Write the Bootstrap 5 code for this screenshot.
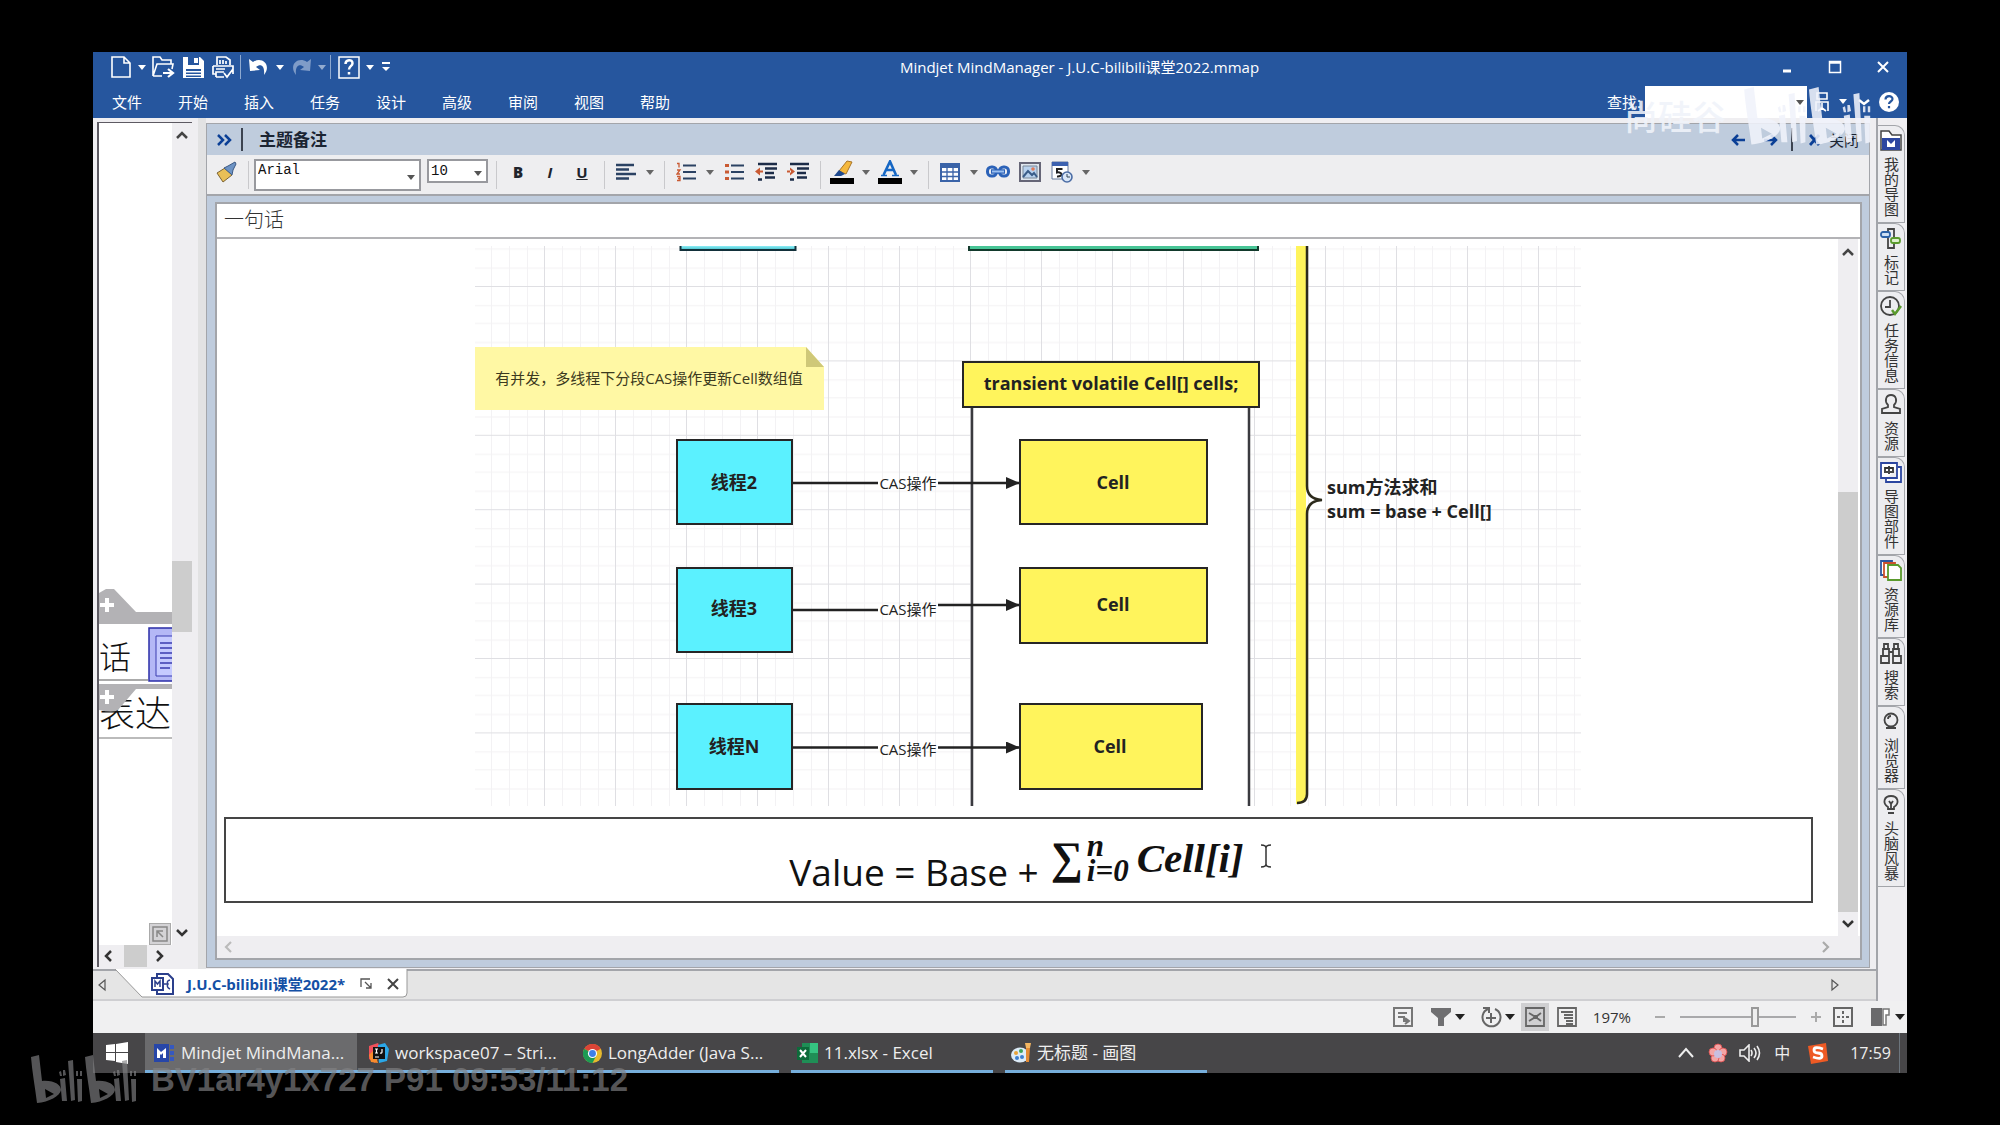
<!DOCTYPE html>
<html lang="zh-CN">
<head>
<meta charset="utf-8">
<meta name="viewport" content="width=device-width, initial-scale=1">
<title>Mindjet MindManager - J.U.C-bilibili课堂2022.mmap</title>
<link href="https://cdn.jsdelivr.net/npm/bootstrap@5.3.0/dist/css/bootstrap.min.css" rel="stylesheet">
<script src="https://cdn.jsdelivr.net/npm/bootstrap@5.3.0/dist/js/bootstrap.bundle.min.js"></script>
<style>
:root{--ui:"Open Sans","Noto Sans CJK SC",sans-serif;--song:"Liberation Serif","Noto Sans CJK SC",serif;--blue:#26569e;--band:#bfccdd;--face:#efeef1;--line:#a3a5aa}
body{background:#000;font-family:var(--ui);font-size:15px;line-height:20px;color:#222;height:100vh;overflow:hidden}
.stage{padding:52px 93px;height:100vh}
button{border:0;background:transparent;padding:0;color:inherit;font:inherit;display:flex;align-items:center;justify-content:center;flex:none}
svg{display:block;flex:none}
.topbar{background:var(--blue);color:#fff}
.titlerow,.menurow{height:33px}
.titlerow{padding:0 0 3px 13px}
.qa{width:30px;height:30px}
.qc{width:12px;height:30px}
.qsep{width:6px;height:24px;border-left:1px solid #8ea9d0;margin-left:2px;margin-right:-2px}
.menurow a{color:#fff;text-decoration:none;width:30px;white-space:nowrap}
.menurow nav{gap:36px;padding-left:19px}
.wbtn{width:48px;height:30px}
.findbox{width:162px;height:32px;border:0;background:#fff;padding:0 8px}
.findwrap{position:relative;color:#555}
.findwrap .caret{position:absolute;right:3px;top:14px}
.caret::before{content:"";border:4px solid transparent;border-top:5px solid currentColor;border-bottom:0}
.mainrow{background:var(--face);min-height:0}
.mapside{width:95px;margin:4px 6px 2px 4px;border-left:2px solid #5d5a62;border-top:1px solid #5d5a62;background:var(--face)}
.canvas{background:#fff;overflow:hidden;position:relative}
.vbar{width:20px;background:var(--face)}
.hbar{height:22px;background:var(--face)}
.thumb{background:#cdcdcd}
.fitcorner{position:absolute;right:1px;bottom:0;width:22px;height:22px;background:#d4d3d6;border:1px solid #aaa}
.split{width:8px;background:#e2e2e3}
.notes{background:var(--band);border:1px solid var(--line);margin:5px 6px 1px 0}
.nhead{height:31px;padding-left:8px;padding-right:10px;color:#1b2432}
.nhead h1{font-size:17px;font-weight:600;line-height:20px}
.nsep{width:2px;height:23px;background:#3c4350}
.ntools{height:41px;background:#eeeef0;border-bottom:2px solid var(--line);padding-left:3px;color:#20242c}
.ib{width:32px;height:34px}
.cb{width:16px;height:34px;color:#666}
.ntools .ib,.ntools .cb{padding-bottom:5px}
.ts{width:12px;height:28px;flex:none;background:linear-gradient(#c9c9cc,#c9c9cc) center/1px 100% no-repeat}
.fieldwrap{position:relative}
.fieldwrap::after{content:"";position:absolute;right:6px;top:50%;border:4px solid transparent;border-top:5px solid #555;border-bottom:0}
.fieldwrap select{appearance:none;width:100%;border:2px solid #98999e;background:#fff;color:#111;font-family:"Liberation Mono",monospace;font-size:14px;line-height:16px;padding:0 2px;display:block}
.fontsel{width:167px}.fontsel select{height:32px;padding-bottom:10px}
.sizesel{width:61px;margin:0 2px 8px 6px}.sizesel select{height:24px}
.sheet{background:#fff;border:2px solid var(--line);margin:6px 7px 7px 8px}
.topic{height:35px;padding:6px 7px;font-family:var(--song);font-size:20px;border-bottom:2px solid #b3b3b6;color:#333;font-weight:300}
.docarea{min-height:0;overflow:hidden;padding-top:7px}
.docscroll{margin-right:2px}
.formula{height:86px;margin:11px 25px 0 7px;border:2px solid #454545;color:#111}
.f1{font-family:"Open Sans",sans-serif;font-weight:400;font-size:37px;line-height:40px;padding-top:23px}
.f2{font-family:"Liberation Serif",serif;font-style:italic;font-weight:700;font-size:41px;line-height:40px;padding:0 16px 4px 12px}
.sums{font-size:31px;line-height:25px;padding-left:4px}
.sigma{font-size:45px;font-style:normal}
.doctabs{height:32px;background:#e5e5e5;border-top:2px solid var(--line);border-bottom:2px solid #cfcfd2}
.dtab{position:relative;height:28px;padding-left:36px;padding-bottom:3px;color:#1450a5;font-weight:700;margin-left:8px;width:293px}
.dtab>svg.tabshape{position:absolute;left:0;top:-2px}
.dtab>*{z-index:1}
.sidetabs{width:31px;border-left:2px solid var(--line);padding-top:7px}
.stab{width:27px;border:1px solid var(--line);border-left:0;border-top-right-radius:10px;flex-direction:column;justify-content:flex-start;padding-top:3px;gap:5px;background:#ededf0;color:#333}
.stab span{writing-mode:vertical-rl;line-height:22px;margin-bottom:5px}
.statusbar{height:32px;background:#f0f0f1;color:#333}
.sb{width:28px;height:28px}
.sb.on{background:#cfcfd1}
.sc{width:14px;height:28px;color:#222}
.sc::before{border-width:5px;border-top-width:6px}
.zoomer{appearance:none;width:116px;height:20px;background:linear-gradient(#a9a9ab,#a9a9ab) center/100% 2px no-repeat;margin:0 7px}
.zoomer::-webkit-slider-thumb{appearance:none;width:8px;height:20px;background:#eee;border:2px solid #999}
.taskbar{height:40px;background:#474648;color:#eee;font-size:16px}
.startbtn{width:52px}
.task{height:40px;width:202px;justify-content:flex-start;border-bottom:3px solid #76aedb;padding-left:6px;gap:6px;padding-top:3px;white-space:nowrap;font-size:17px}
.task.live{background:#6b6b6d;width:212px;padding-left:9px}
.task.wide{width:208px;padding-left:12px}
.task.apart{margin-left:12px}
.tray{width:32px;height:40px}
.wm{position:absolute;pointer-events:none;white-space:nowrap}
.wmtop{left:1624px;top:79px;color:rgba(240,243,250,.88);font-size:34px;line-height:76px;font-weight:500;gap:18px}
.wmbot{left:31px;top:1044px;color:#828284;opacity:.66;font:700 33px/72px "Liberation Sans",sans-serif;gap:12px}
</style>
</head>
<body>
<div class="stage">
<div class="d-flex flex-column h-100">
<header class="topbar">
 <div class="titlerow d-flex align-items-center">
  <button class="qa" aria-label="新建"><svg width="20" height="24" viewBox="0 0 20 24" fill="none" stroke="#fff" stroke-width="1.6"><path d="M1 2h12l6 6v14H1zM13 2v6h6"/></svg></button><button class="qc caret" aria-label="新建选项"></button>
  <button class="qa" aria-label="打开"><svg width="24" height="24" viewBox="0 0 24 24" fill="none" stroke="#fff" stroke-width="1.6"><path d="M2 21V2h7l2 3h9v4M2 21L6 9h16l-1 5M2 21h9"/><path d="M12 18h9M17 14l5 4-5 4" stroke-width="2.2"/></svg></button>
  <button class="qa" aria-label="保存"><svg width="23" height="23" viewBox="0 0 23 23"><path d="M1 1h17l4 4v17H1z" fill="#fff"/><path d="M6 1h11v8H6zM4 13h15v8H4z" fill="#26569e"/><path d="M12 2h4v5h-4zM4 15h15v1.500H4zM4 18h15v1.500H4z" fill="#fff"/></svg></button>
  <button class="qa" aria-label="打印"><svg width="24" height="24" viewBox="0 0 24 24" fill="none" stroke="#fff" stroke-width="1.7"><path d="M6 10V2h9l4 3v5M9 5v4M12 5v4M15 6v3M2 11h20v8M2 11v8h3M5 14h9M5 22V17h8M5 22h8M13 18l3 4 6-8"/></svg></button>
  <span class="qsep"></span>
  <button class="qa" aria-label="撤消"><svg width="22" height="20" viewBox="0 0 22 20"><path d="M1 2l1 12 10-1-4-3c5-4 9-1 8 8C24 8 14-1 5 5z" fill="#fff"/></svg></button><button class="qc caret" aria-label="撤消选项"></button>
  <button class="qa" aria-label="恢复"><svg width="22" height="20" viewBox="0 0 22 20"><path d="M21 2l-1 12-10-1 4-3c-5-4-9-1-8 8C-2 8 8-1 17 5z" fill="#7f9cc8"/></svg></button><button class="qc caret text-white-50" aria-label="恢复选项"></button>
  <span class="qsep"></span>
  <button class="qa" aria-label="帮助"><svg width="22" height="24" viewBox="0 0 22 24" fill="none" stroke="#fff"><path d="M1 2h20v21H1z" stroke-width="1.500"/><path d="M7.500 9c0-5 7-5 7-.8 0 3-3.500 3-3.500 6.300M11 17v2.500" stroke-width="2.500"/></svg></button><button class="qc caret" aria-label="帮助选项"></button>
  <button class="qc ms-1" aria-label="自定义"><svg width="8" height="10" viewBox="0 0 8 10"><path d="M0 0h8v2H0zM0 5h8L4 9z" fill="#fff"/></svg></button>
  <div class="flex-fill text-center ps-1">Mindjet MindManager - J.U.C-bilibili课堂2022.mmap</div>
  <button class="wbtn" aria-label="最小化"><svg width="12" height="12"><path d="M2 10h8" stroke="#fff" stroke-width="3"/></svg></button>
  <button class="wbtn" aria-label="最大化"><svg width="14" height="14"><path d="M1.500 1.500h11v11h-11zM1 3h12" fill="none" stroke="#fff" stroke-width="1.500"/></svg></button>
  <button class="wbtn" aria-label="关闭"><svg width="12" height="12"><path d="M1 1l10 10M11 1L1 11" stroke="#fff" stroke-width="2"/></svg></button>
 </div>
 <div class="menurow d-flex align-items-center">
  <nav class="d-flex flex-fill"><a href="#">文件</a><a href="#">开始</a><a href="#">插入</a><a href="#">任务</a><a href="#">设计</a><a href="#">高级</a><a href="#">审阅</a><a href="#">视图</a><a href="#">帮助</a></nav>
  <label for="find" class="pe-1">查找:</label><div class="findwrap align-self-end"><input id="find" class="findbox d-block" type="text"><span class="caret d-flex"></span></div>
  <button class="qa" aria-label="用户"><svg width="18" height="22" viewBox="0 0 18 22" fill="none" stroke="#fff" stroke-width="1.600"><path d="M4 2h10v6H4zM3 20V11h12v9M9 12v5l-4 3M9 17l4 3"/></svg></button>
  <button class="qc caret" aria-label="用户选项"></button>
  <button class="qa" aria-label="折叠"><svg width="12" height="8"><path d="M1 2l5 4 5-4" fill="none" stroke="#fff" stroke-width="2.500"/></svg></button>
  <button class="me-2" aria-label="帮助中心"><svg width="20" height="20" viewBox="0 0 20 20"><circle cx="10" cy="10" r="10" fill="#fff"/><path d="M6.500 7.500c0-4.500 7-4.500 7-.5 0 2.500-3.500 2.500-3.500 5M10 14v2.200" stroke="#26569e" stroke-width="2.200" fill="none"/></svg></button>
 </div>
</header>

<main class="mainrow d-flex flex-fill">
 <div class="flex-fill d-flex flex-column" style="min-width:0">
  <div class="flex-fill d-flex" style="min-height:0">
   <section class="mapside d-flex flex-column">
    <div class="flex-fill d-flex">
     <div class="canvas flex-fill">
      <svg width="73" height="640" viewBox="0 0 73 640">
       <path d="M0 470l7-4h8l22 23h37v12H0z" fill="#b3b2b5"/>
       <path d="M8 475v14M1 482h14" stroke="#fff" stroke-width="4"/>
       <text x="0" y="546" font-size="32" font-family="Noto Sans CJK SC" font-weight="300" fill="#111">话</text>
       <path d="M50 505h26v53H50z" fill="#b4b8f6" stroke="#2a2ca8" stroke-width="1.500"/><path d="M57 513h20v40H57z" fill="#c5caff" stroke="#3b3db0"/><path d="M61 520h13M61 525h13M61 530h13M61 535h13M61 540h13M61 545h10" stroke="#3b3db0" stroke-width="1.500"/>
       <path d="M0 557h49" stroke="#aaa" stroke-width="2"/>
       <text x="0" y="604" font-size="36" font-family="Noto Sans CJK SC" font-weight="300" fill="#111">表达</text>
       <path d="M0 561h74v5H37L19 587q-5 3-19 0z" fill="#b3b2b5"/>
       <path d="M8 567v14M1 574h14" stroke="#fff" stroke-width="4"/>
       <path d="M0 615h74" stroke="#bbb" stroke-width="2"/>
      </svg>
      <button class="fitcorner" aria-label="适合"><svg width="16" height="16" viewBox="0 0 16 16" fill="none" stroke="#888" stroke-width="1.500"><path d="M1 1h14v14H1zM5 11V5h6M5 5l6 6"/></svg></button>
     </div>
     <div class="vbar d-flex flex-column align-items-center">
      <svg width="20" height="22"><path d="M5 15l5-5 5 5" fill="none" stroke="#444" stroke-width="2.500"/></svg>
      <div style="flex:417"></div><div class="thumb w-100" style="flex:71"></div><div style="flex:289"></div>
      <svg width="20" height="24"><path d="M5 9l5 5 5-5" fill="none" stroke="#333" stroke-width="2.500"/></svg>
     </div>
    </div>
    <div class="hbar d-flex align-items-center">
     <svg width="25" height="20"><path d="M12 5l-5 5 5 5" fill="none" stroke="#333" stroke-width="2.500"/></svg>
     <div class="thumb h-100" style="width:23px"></div>
     <svg width="25" height="20"><path d="M10 5l5 5-5 5" fill="none" stroke="#333" stroke-width="2.500"/></svg>
    </div>
   </section>
   <div class="split"></div>
   <section class="notes flex-fill d-flex flex-column" style="min-width:0">
    <div class="nhead d-flex align-items-center">
     <button aria-label="收起"><svg width="18" height="14"><path d="M3 2l5 5-5 5M10 2l5 5-5 5" fill="none" stroke="#0b3f96" stroke-width="2.500"/></svg></button>
     <span class="nsep ms-2 me-1"></span><h1 class="m-0 ms-2 ps-1 flex-fill">主题备注</h1>
     <button class="ib" aria-label="上一个"><svg width="15" height="14"><path d="M14 7H2M7 2L2 7l5 5" fill="none" stroke="#0b3f96" stroke-width="2.500"/></svg></button>
     <button class="ib" aria-label="下一个"><svg width="15" height="14"><path d="M1 7h12M8 2l5 5-5 5" fill="none" stroke="#0b3f96" stroke-width="2.500"/></svg></button>
     <span class="nsep ms-1 me-3"></span>
     <button aria-label="关闭备注"><svg class="me-2" width="12" height="12"><path d="M1 1l9 10M10 1L1 11" stroke="#0b3f96" stroke-width="2.800"/></svg><span>关闭</span></button>
    </div>
    <div class="ntools d-flex align-items-center">
     <button class="ib" aria-label="格式刷"><svg width="22" height="22" viewBox="0 0 22 22"><path d="M2 12l8-5 7 7-9 7z" fill="#e9bf57" stroke="#7b6334"/><path d="M9 7l4-2 7-4 1 2-3 6-1 5z" fill="#6d93c4" stroke="#3c5a85"/></svg></button><span class="ts"></span>
     <div class="fieldwrap fontsel"><select aria-label="字体"><option>Arial</option></select></div>
     <div class="fieldwrap sizesel"><select aria-label="字号"><option>10</option></select></div>
     <span class="ts"></span>
     <button class="ib fw-bold" aria-label="加粗"><b>B</b></button><button class="ib fst-italic fw-bold" aria-label="倾斜">I</button><button class="ib text-decoration-underline fw-bold" aria-label="下划线">U</button>
     <span class="ts"></span>
     <button class="ib" aria-label="对齐"><svg width="20" height="18"><path d="M0 2h18M0 6.500h13M0 11h20M0 15.500h13" stroke="#2b4263" stroke-width="2.500"/></svg></button><button class="cb caret" aria-label="对齐选项"></button>
     <span class="ts"></span>
     <button class="ib" aria-label="编号"><svg width="20" height="20"><path d="M7 3.500h13M7 10h13M7 16.500h13" stroke="#2b4263" stroke-width="2.200"/><path d="M1 1.500h2v4M1 8h3l-3 4h3M1 14.500h3v4H1M2 16.500h2" fill="none" stroke="#c95a33" stroke-width="1.300"/></svg></button><button class="cb caret" aria-label="编号选项"></button>
     <button class="ib" aria-label="项目符号"><svg width="20" height="20"><path d="M7 3.500h13M7 10h13M7 16.500h13" stroke="#2b4263" stroke-width="2.200"/><path d="M1 2h4v3H1zM1 8.500h4v3H1zM1 15h4v3H1z" fill="#c95a33"/></svg></button>
     <button class="ib" aria-label="减少缩进"><svg width="22" height="20"><path d="M3 2h19M10 6.500h12M10 11h9M3 17.500h4M10 15.500h10" stroke="#1c2c48" stroke-width="2.400"/><path d="M0 9.500l5-4v8zM4 8.500h4v2H4z" fill="#c95a33"/></svg></button>
     <button class="ib" aria-label="增加缩进"><svg width="22" height="20"><path d="M3 2h19M10 6.500h12M10 11h9M3 17.500h4M10 15.500h10" stroke="#1c2c48" stroke-width="2.400"/><path d="M8 9.500l-5-4v8zM0 8.500h4v2H0z" fill="#c95a33"/></svg></button>
     <span class="ts"></span>
     <button class="ib" aria-label="突出显示"><svg width="24" height="24" viewBox="0 0 24 24"><path d="M0 18h24v6H0z" fill="#000"/><path d="M9 11l8-10 5 1-6 12z" fill="#f5b83d" stroke="#a8752a"/><path d="M4 16l5-6 6 4-4 2z" fill="#1f4a8f"/></svg></button><button class="cb caret" aria-label="突出显示选项"></button>
     <button class="ib" aria-label="字体颜色"><svg width="24" height="24" viewBox="0 0 24 24"><path d="M0 18h24v6H0z" fill="#000"/><path d="M5.500 15L12 1.500 18 15M8 10h8" fill="none" stroke="#1667c4" stroke-width="2.600"/><path d="M3 15.500h6M14 15.500h7" stroke="#1667c4" stroke-width="1.600"/></svg></button><button class="cb caret" aria-label="字体颜色选项"></button>
     <span class="ts"></span>
     <button class="ib" aria-label="表格"><svg width="20" height="19"><path d="M1 1h18v17H1z" fill="#fff" stroke="#3a63a8" stroke-width="2"/><path d="M1 1h18v4H1z" fill="#3a63a8"/><path d="M1 9h18M1 13.500h18M7 4v14M13 4v14" stroke="#3a63a8" stroke-width="1.300"/></svg></button><button class="cb caret" aria-label="表格选项"></button>
     <button class="ib" aria-label="链接"><svg width="24" height="16" viewBox="0 0 24 16" fill="none"><rect x="1.500" y="3" width="9" height="9" rx="4" stroke="#2b62b8" stroke-width="3"/><rect x="13.500" y="3" width="9" height="9" rx="4" stroke="#2b62b8" stroke-width="3"/><path d="M5 7.500h14" stroke="#2b62b8" stroke-width="4.500"/><path d="M6 7.500h12" stroke="#9cc0f0" stroke-width="2"/></svg></button>
     <button class="ib" aria-label="图片"><svg width="22" height="20"><path d="M1 1h20v18H1z" fill="#dfe6ee" stroke="#667" stroke-width="2"/><path d="M4 4h14v12H4z" fill="#b9d2ee" stroke="#7b8898"/><path d="M4 15l5-6 4 4 2-2 3 4" fill="none" stroke="#3a5c88" stroke-width="2"/><circle cx="14" cy="7" r="1.800" fill="#e07a58"/></svg></button>
     <button class="ib" aria-label="日期"><svg width="24" height="24" viewBox="0 0 24 24"><path d="M2 2h16v17H2z" fill="#fff" stroke="#667a9c"/><path d="M2 2h16v4H2z" fill="#3d62b0"/><path d="M12.500 9H7v3.500c6-1 6 4.500 0 4" fill="none" stroke="#222" stroke-width="2"/><circle cx="17" cy="17" r="5" fill="#d9e6f7" stroke="#4b6da5" stroke-width="1.600"/><path d="M17 14v3h3" fill="none" stroke="#345"/></svg></button><button class="cb caret" aria-label="日期选项"></button>
    </div>
    <div class="sheet flex-fill d-flex flex-column" style="min-height:0">
     <div class="topic">一句话</div>
     <div class="flex-fill d-flex" style="min-height:0">
      <div class="docarea flex-fill">
       <svg class="mx-auto" width="1106" height="560" viewBox="475 246 1106 560" font-family="Noto Sans, Noto Sans CJK SC, sans-serif" fill="#222" text-anchor="middle">
        <defs>
         <pattern id="grid" x="544" y="286" width="71" height="74.400" patternUnits="userSpaceOnUse"><path d="M18.500 0v75M36.500 0v75M54.500 0v75M0 19.500h72M0 37.500h72M0 56.500h72" stroke="#f3f2f4" fill="none"/><path d="M.5 0v75M0 .5h72" stroke="#dfdfe3" fill="none"/></pattern>
         <linearGradient id="cy" x2="0" y2="1"><stop stop-color="#8deff8"/><stop offset="1" stop-color="#3fb9c4"/></linearGradient>
         <marker id="arr" viewBox="0 0 14 12" refX="13" refY="6" markerWidth="15" markerHeight="12" markerUnits="userSpaceOnUse" orient="auto"><path d="M0 0l14 6-14 6z" fill="#222"/></marker>
        </defs>
        <path d="M474 246h1107v560H474z" fill="url(#grid)"/>
        <path d="M680 246h116v4H680z" fill="url(#cy)"/><path d="M680.500 246v4h115v-4" fill="none" stroke="#12303a" stroke-width="2"/>
        <path d="M968 246h290v4H968z" fill="#48c596"/><path d="M969 246v4h289v-4" fill="none" stroke="#123a2c" stroke-width="2"/>
        <path d="M474 347h332l18 20v43H474z" fill="#fff8a4"/><path d="M806 347v20h18z" fill="#cfc878"/>
        <text x="649" y="384" font-size="15" font-family="Open Sans, Noto Sans CJK SC, sans-serif" fill="#3c3a20">有并发，多线程下分段CAS操作更新Cell数组值</text>
        <path d="M972 390h277v416H972z" fill="#fff"/><path d="M972 806V400M1249 400v406" stroke="#3a3a3f" stroke-width="2.500"/>
        <g stroke="#262626" stroke-width="2"><path d="M963 362h296v45H963z" fill="#fff45c"/>
        <path d="M677 440h115v84H677zM677 568h115v84H677zM677 704h115v85H677z" fill="#5bf1ff"/>
        <path d="M1020 440h187v84h-187zM1020 568h187v75h-187zM1020 704h182v85h-182z" fill="#fff45c"/></g>
        <g stroke="#222" stroke-width="2.500"><path d="M793 483h85M793 610h85M793 747.500h85"/><path d="M938 483h81" marker-end="url(#arr)"/><path d="M938 605h81" marker-end="url(#arr)"/><path d="M938 747.500h81" marker-end="url(#arr)"/></g>
        <g font-family="Open Sans, Noto Sans CJK SC, sans-serif" font-size="15"><text x="908" y="489">CAS操作</text><text x="908" y="615">CAS操作</text><text x="908" y="755">CAS操作</text></g>
        <g font-weight="700" font-size="18" font-family="Open Sans, Noto Sans CJK SC, sans-serif"><text x="1111" y="390">transient volatile Cell[] cells;</text>
        <text x="734" y="489">线程2</text><text x="734" y="615">线程3</text><text x="734" y="753">线程N</text>
        <text x="1113" y="489">Cell</text><text x="1113" y="611">Cell</text><text x="1110" y="753">Cell</text>
        <text x="1327" y="494" text-anchor="start">sum方法求和</text><text x="1327" y="518" text-anchor="start">sum = base + Cell[]</text></g>
        <path d="M1296 246h10v550q0 8-10 8z" fill="#fff45c"/>
        <path d="M1307 246v240q0 13 15 14-15 1-15 14v280q0 9-10 9" fill="none" stroke="#2c2a1c" stroke-width="2.500"/>
       </svg>
       <div class="formula d-flex justify-content-center align-items-center ps-4">
        <span class="f1">Value = Base +</span>
        <span class="f2 d-flex align-items-center"><span class="sigma">∑</span><span class="sums d-flex flex-column"><span>n</span><span>i=0</span></span><span class="ps-2">Cell[i]</span></span>
        <svg width="12" height="40"><path d="M1 5q5 0 5 3v16q0 3-5 3M11 5q-5 0-5 3v16q0 3 5 3" fill="none" stroke="#333" stroke-width="1.500"/></svg>
       </div>
      </div>
      <div class="vbar docscroll d-flex flex-column align-items-center">
       <svg width="20" height="26"><path d="M5 16l5-5 5 5" fill="none" stroke="#444" stroke-width="2.500"/></svg>
       <div style="flex:226"></div><div class="thumb w-100" style="flex:418"></div>
       <svg width="20" height="24"><path d="M5 9l5 5 5-5" fill="none" stroke="#333" stroke-width="2.500"/></svg>
      </div>
     </div>
     <div class="hbar d-flex align-items-center justify-content-between">
      <svg width="22" height="20"><path d="M14 5l-5 5 5 5" fill="none" stroke="#bbb" stroke-width="2.200"/></svg>
      <svg class="me-4" width="20" height="20"><path d="M7 5l5 5-5 5" fill="none" stroke="#aaa" stroke-width="2.200"/></svg>
     </div>
    </div>
   </section>
  </div>
  <div class="doctabs d-flex align-items-center">
   <button class="ps-1" aria-label="向左"><svg width="10" height="14"><path d="M8 2v10L2 7z" fill="none" stroke="#555" stroke-width="1.200"/></svg></button>
   <div class="dtab d-flex align-items-center">
    <svg class="tabshape" width="293" height="30"><path d="M0 0l27 28h261q4 0 4-4V0" fill="#fff" stroke="#999"/></svg>
    <svg class="position-relative" width="24" height="22" viewBox="0 0 24 22" fill="none" stroke="#2b3f8c" stroke-width="2"><path d="M6 5V1h11l5 5v15H6v-4M1 5h11v12H1z" fill="#fff"/><path d="M4 14V8l2.500 3L9 8v6M12 11h5M19 7q-4 1-2 4-2 3 2 5" stroke-width="1.500"/></svg>
    <span class="position-relative ps-2 ms-1 text-nowrap">J.U.C-bilibili课堂2022*</span>
    <button class="position-relative ms-auto" aria-label="还原"><svg width="14" height="12" fill="none" stroke="#555" stroke-width="1.300"><path d="M1 9V1h9M5 4l6 6M11 5v5H6"/></svg></button>
    <button class="position-relative ms-2 me-2 ps-1" aria-label="关闭文档"><svg width="14" height="12"><path d="M2 1l10 10M12 1L2 11" stroke="#444" stroke-width="2"/></svg></button>
   </div>
   <button class="ms-auto me-4 pe-2 ps-1" aria-label="向右"><svg class="me-1" width="10" height="14"><path d="M2 2v10l6-5z" fill="none" stroke="#555" stroke-width="1.200"/></svg></button>
  </div>
 </div>
 <aside class="sidetabs d-flex flex-column align-items-start">
  <button class="stab"><svg width="22" height="23" viewBox="0 0 22 23"><path d="M1 21V2h8l3 4h9v15z" fill="#fff" stroke="#444" stroke-width="1.500"/><path d="M2 9h18v12H2z" fill="#2c46a0"/><path d="M7 18v-7l4 4 4-4v7z" fill="#fff"/></svg><span>我的导图</span></button>
  <button class="stab"><svg width="22" height="23" viewBox="0 0 22 23" fill="none" stroke-width="1.800"><path d="M8 2h6v19H8z" stroke="#444"/><rect x="1" y="5" width="9" height="5" rx="2" fill="#cfe0f5" stroke="#2d62a8"/><rect x="11" y="11" width="9" height="5" rx="2" fill="#dff0cf" stroke="#5a9a2d"/></svg><span>标记</span></button>
  <button class="stab"><svg width="22" height="23" viewBox="0 0 22 23" fill="none" stroke-width="1.800"><circle cx="10" cy="11" r="9" stroke="#444"/><path d="M10 5v7H5" stroke="#444"/><path d="M12 15l3 4 6-8" stroke="#5a9a2d" stroke-width="2.500"/></svg><span>任务信息</span></button>
  <button class="stab"><svg width="22" height="23" viewBox="0 0 22 23" fill="none" stroke="#444" stroke-width="1.800"><path d="M2 20v-4l6-2v-2C4 8 6 2 11 2s7 6 3 10v2l6 2v4z"/></svg><span>资源</span></button>
  <button class="stab"><svg width="22" height="23" viewBox="0 0 22 23" fill="none" stroke="#2c46a0" stroke-width="1.800"><path d="M6 18v3h15V6h-3M1 2h16v15H1z" fill="#fff"/><path d="M5 12V7h8v5M9 5v8M7 12v-2M11 12v-2" stroke="#333"/></svg><span>导图部件</span></button>
  <button class="stab"><svg width="22" height="23" viewBox="0 0 22 23" fill="#fff" stroke-width="1.800"><path d="M1 2h11v14H1z" stroke="#2c56a0"/><path d="M4 4h11v14H4z" stroke="#c9502d"/><path d="M8 6h10l3 3v12H8z" stroke="#5a9a2d"/></svg><span>资源库</span></button>
  <button class="stab"><svg width="22" height="23" viewBox="0 0 22 23" fill="none" stroke="#444" stroke-width="1.800"><path d="M4 2h4v5H4zM14 2h4v5h-4zM3 7h6v7H3zM13 7h6v7h-6zM1 14h8v7H1zM13 14h8v7h-8zM9 10h4"/></svg><span>搜索</span></button>
  <button class="stab"><svg width="22" height="23" viewBox="0 0 22 23" fill="none" stroke="#444" stroke-width="1.800"><circle cx="11" cy="10" r="6.500"/><path d="M6 18h10M8 9q0-3 3-3"/></svg><span>浏览器</span></button>
  <button class="stab"><svg width="22" height="23" viewBox="0 0 22 23" fill="none" stroke="#444" stroke-width="1.800"><path d="M8 16v-2C2 10 4 3 11 3s9 7 3 11v2zM8 20h6M9 8l2 3 2-3M11 11v5"/></svg><span>头脑风暴</span></button>
 </aside>
</main>

<div class="statusbar d-flex align-items-center justify-content-end">
 <button class="sb" aria-label="备注"><svg width="20" height="20" fill="none" stroke="#777" stroke-width="2"><path d="M1 1h18v18H1zM5 6h9M5 10h6v4h5M12 11l4 3-4 3" /></svg></button>
 <button class="sb ms-2 ps-1" aria-label="筛选"><svg width="20" height="20"><path d="M0 1h20v4l-7 6v8H7v-8L0 5z" fill="#6f6f71"/></svg></button><button class="sc caret me-2" aria-label="筛选选项"></button>
 <button class="sb ps-1" aria-label="添加"><svg width="22" height="22" viewBox="0 0 22 22" fill="none" stroke="#666" stroke-width="2"><path d="M8 3a9 9 0 1 0 7 0M11 7v10M6 12h10M3 2h6v5"/></svg></button><button class="sc caret me-1" aria-label="添加选项"></button>
 <button class="sb on" aria-label="导图视图"><svg width="20" height="20" fill="none" stroke="#666" stroke-width="1.800"><path d="M1 1h18v18H1zM4 6l5 3h3l4-3M4 14l5-3h3l4 3M8 10h5"/></svg></button>
 <button class="sb ms-1" aria-label="大纲视图"><svg width="20" height="20" fill="none" stroke="#666" stroke-width="1.800"><path d="M1 1h18v18H1zM4 5h12M7 8h9M7 11h9M9 14h7M9 17h7"/></svg></button>
 <span class="ms-2 ps-1 me-3">197%</span>
 <button class="px-2" aria-label="缩小"><svg width="10" height="10"><path d="M0 5h10" stroke="#aaa" stroke-width="2"/></svg></button>
 <input class="zoomer" type="range" min="0" max="100" value="66" aria-label="缩放">
 <button class="px-2" aria-label="放大"><svg width="10" height="10"><path d="M0 5h10M5 0v10" stroke="#aaa" stroke-width="2"/></svg></button>
 <button class="sb" aria-label="适合页面"><svg width="20" height="20" fill="none" stroke="#666" stroke-width="2"><path d="M1 1h18v18H1zM10 4v3M10 13v3M4 10h3M13 10h3M9 10h2"/></svg></button>
 <button class="sb ms-2 ps-1" aria-label="面板"><svg width="20" height="18"><path d="M0 0h11v18H0z" fill="#6a6a6c"/><path d="M12 1h6v6h-3v10h-3z" fill="#fff" stroke="#777" stroke-width="1.500"/></svg></button><button class="sc caret" aria-label="面板选项"></button>
</div>

<footer class="taskbar d-flex align-items-center">
 <button class="startbtn" aria-label="开始菜单"><svg class="me-1" width="22" height="22"><path d="M0 3l9-1v8H0zM10 2l12-2v10H10zM0 11h9v8l-9-1zM10 11h12v11l-12-2z" fill="#fff"/></svg></button>
 <button class="task live"><svg width="21" height="18"><path d="M0 0h15v18H0z" fill="#2746a8"/><path d="M3 14V4l4 4 5-4v10H9V9l-2 2-1-1v4z" fill="#fff"/><path d="M16 1h4v4h-4zM16 7h4v4h-4zM16 13h4v4h-4z" fill="#3558c0"/></svg>Mindjet MindMana...</button>
 <button class="task wide"><svg width="20" height="20"><path d="M0 3l9-3 4 9-7 11-6-4z" fill="#f0505a"/><path d="M9 2l7-2 4 6-2 12-8 2z" fill="#2aa7e8"/><path d="M0 12l5-5 4 13-7-1z" fill="#f98c2c"/><path d="M4 4h12v12H4z" fill="#111"/><path d="M6 6h3M7.500 6v4M6 10h3M13 6v3q0 1.500-2 1M6 14h4" fill="none" stroke="#fff" stroke-width="1.200"/></svg>workspace07 – Stri...</button>
 <button class="task apart"><svg width="19" height="19" viewBox="0 0 20 20"><circle cx="10" cy="10" r="10" fill="#e5b92e"/><path d="M10 10L1.300 5A10 10 0 0 1 18.700 5z" fill="#db4437"/><path d="M10 10L1.300 5A10 10 0 0 0 10 20l4-8z" fill="#1c9b54"/><circle cx="10" cy="10" r="4.800" fill="#fff"/><circle cx="10" cy="10" r="3.600" fill="#3d7fe8"/></svg>LongAdder (Java S...</button>
 <button class="task apart"><svg width="21" height="20"><path d="M5 0h16v20H5z" fill="#1f8f56"/><path d="M13 0h8v10h-8z" fill="#35c481"/><path d="M0 4h12v13H0z" fill="#0d6b3a"/><path d="M3 7l6 7M9 7l-6 7" stroke="#fff" stroke-width="2"/></svg>11.xlsx - Excel</button>
 <button class="task apart"><svg width="20" height="20"><ellipse cx="9" cy="12" rx="9" ry="7.500" fill="#dcebf8"/><circle cx="5" cy="10" r="2" fill="#e8a33a"/><circle cx="10" cy="8" r="2" fill="#3da35a"/><circle cx="6" cy="15" r="2" fill="#3b7fd0"/><circle cx="11" cy="14" r="2" fill="#3b7fd0"/><path d="M15 4h4l-1 15h-3z" fill="#e38b35"/><path d="M14 0h6l-1 5h-4z" fill="#f3b661"/></svg>无标题 - 画图</button>
 <div class="ms-auto d-flex align-items-center">
  <button class="tray" aria-label="显示隐藏图标"><svg width="16" height="12"><path d="M1 10l7-8 7 8" fill="none" stroke="#eee" stroke-width="2"/></svg></button>
  <button class="tray" aria-label="花朵"><svg width="20" height="20"><g fill="#f4a5a5" stroke="#e04a4a" stroke-width=".8"><circle cx="10" cy="5" r="4"/><circle cx="15" cy="9" r="4"/><circle cx="13" cy="15" r="4"/><circle cx="7" cy="15" r="4"/><circle cx="5" cy="9" r="4"/></g><circle cx="10" cy="11" r="4" fill="#c9bfe0"/></svg></button>
  <button class="tray" aria-label="音量"><svg width="22" height="18" fill="none" stroke="#eee" stroke-width="1.600"><path d="M1 6h4l5-5v16l-5-5H1zM12 6q2 3 0 6M15 4q4 5 0 10M18 2q5 7 0 14"/></svg></button>
  <button class="tray fs-6">中</button>
  <button class="tray mx-1" aria-label="输入法"><svg width="22" height="21"><path d="M1 3l18-3 2 18-17 3z" fill="#ee5a24"/><path d="M16 6q-9-3-9 1 0 3 4 3t4 3q0 4-9 1" fill="none" stroke="#fff" stroke-width="2.800"/></svg></button>
  <span class="ps-2 ms-1">17:59</span><span class="ms-2 border-start border-secondary" style="height:40px;width:8px"></span>
 </div>
</footer>
</div>
</div>

<svg width="0" height="0" class="position-absolute"><symbol id="bili" viewBox="0 0 108 50"><g id="bilihalf" fill="currentColor"><path fill-rule="evenodd" d="M0 2l8-2 3 26c12-1 19 4 19 9-1 6-12 12-24 13C4 32 1 16 0 2zM14 34l1 9 8-4z"/><path d="M29 24l5-1 2 23h-5zM37 6l5-1 2 40-4 1zM46 24h5v22l-4 1zM28 17l2-1 1 5h-2zM32 15h2l1 5-3 1zM45 16h2v5h-2zM49 16h2v5h-2z"/></g><use href="#bilihalf" x="54"/></symbol></svg>
<div class="wm wmtop d-flex align-items-center"><span>尚硅谷</span><svg width="130" height="60"><use href="#bili"/></svg></div>
<div class="wm wmbot d-flex align-items-center"><svg width="108" height="50"><use href="#bili"/></svg><span>BV1ar4y1x727 P91 09:53/11:12</span></div>
</body>
</html>
